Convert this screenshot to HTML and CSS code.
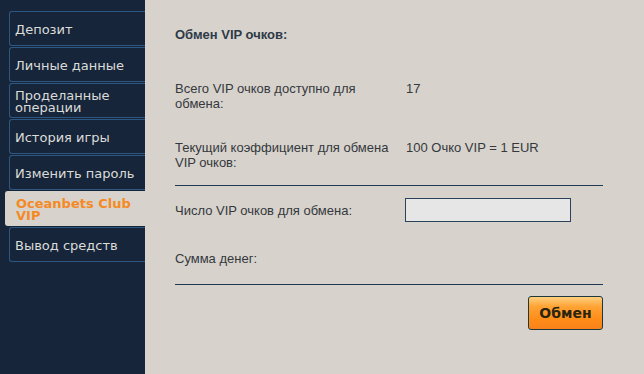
FILE: index.html
```html
<!DOCTYPE html>
<html lang="ru">
<head>
    <meta charset="UTF-8">
    <meta name="viewport" content="width=device-width, initial-scale=1.0">
    <title>Обмен VIP очков</title>
    <link rel="stylesheet" href="styles.css">
</head>
<body>
    <div class="page">
        <nav class="sidebar">
            <ul class="menu">
                <li class="menu-item">Депозит</li>
                <li class="menu-item">Личные данные</li>
                <li class="menu-item">Проделанные операции</li>
                <li class="menu-item">История игры</li>
                <li class="menu-item">Изменить пароль</li>
                <li class="menu-item active">Oceanbets Club VIP</li>
                <li class="menu-item">Вывод средств</li>
            </ul>
        </nav>

        <main class="content">
            <h2 class="title">Обмен VIP очков:</h2>

            <div class="info-row first">
                <div class="label">Всего VIP очков доступно для обмена:</div>
                <div class="value">17</div>
            </div>
            <div class="info-row">
                <div class="label">Текущий коэффициент для обмена VIP очков:</div>
                <div class="value">100 Очко VIP = 1 EUR</div>
            </div>

            <div class="divider"></div>

            <div class="form-row">
                <label class="label" for="points">Число VIP очков для обмена:</label>
                <input type="text" class="points-input" id="points">
            </div>
            <div class="info-row sum">
                <div class="label">Сумма денег:</div>
                <div class="value"></div>
            </div>

            <div class="divider"></div>

            <div class="actions">
                <button class="exchange-btn">Обмен</button>
            </div>
        </main>
    </div>
</body>
</html>
```

FILE: styles.css
```css
:root {
    --nav-bg: #16253a;
    --nav-border: #2d5680;
    --nav-text: #dcdcd8;
    --content-bg: #d7d3cc;
    --text-color: #35383d;
    --title-color: #2e3a48;
    --line-color: #1f3a52;
    --accent: #f58a25;
}

html, body {
    height: 100%;
}

body {
    margin: 0;
    background-color: var(--content-bg);
    font-family: "Liberation Sans", Arial, sans-serif;
}

.page {
    display: flex;
    min-height: 100%;
}

.sidebar {
    width: 145px;
    flex-shrink: 0;
    background-color: var(--nav-bg);
    padding-top: 11px;
    box-sizing: border-box;
}

.menu {
    list-style: none;
    margin: 0;
    padding: 0 0 0 9px;
}

.menu-item {
    display: flex;
    align-items: center;
    height: 35px;
    margin-bottom: 1px;
    padding: 3px 6px 0 5px;
    box-sizing: border-box;
    border: 1px solid var(--nav-border);
    border-right: none;
    border-radius: 3px 0 0 3px;
    color: var(--nav-text);
    font-family: "DejaVu Sans", Verdana, sans-serif;
    font-size: 13px;
    line-height: 12px;
}

.menu-item.active {
    margin-left: -4px;
    padding-left: 10px;
    border-color: var(--content-bg);
    background-color: var(--content-bg);
    color: var(--accent);
    font-weight: bold;
}

.content {
    flex: 1;
    padding: 27px 41px 20px 30px;
    color: var(--text-color);
    font-size: 13px;
    line-height: 15px;
}

.title {
    margin: 0 0 38px 0;
    font-size: 13px;
    line-height: 16px;
    color: var(--title-color);
}

.info-row,
.form-row {
    display: grid;
    grid-template-columns: 231px 1fr;
}

.info-row.first {
    margin-bottom: 29px;
}

.label {
    padding-right: 12px;
}

.divider {
    height: 1px;
    background-color: var(--line-color);
    margin-top: 15px;
}

.form-row {
    align-items: center;
    margin-top: 12px;
}

.points-input {
    width: 166px;
    height: 24px;
    box-sizing: border-box;
    border: 1px solid #2a4358;
    background-color: #e6e6e6;
    margin-left: -1px;
}

.info-row.sum {
    margin-top: 29px;
}

.sum + .divider {
    margin-top: 18px;
}

.actions {
    display: flex;
    justify-content: flex-end;
    margin-top: 11px;
}

.exchange-btn {
    width: 75px;
    height: 34px;
    border: 1px solid #1c3a3e;
    border-radius: 3px;
    background: linear-gradient(to bottom, #ffcf7e 0%, #ffa335 30%, #ff8c18 70%, #f7821a 100%);
    color: #2a2410;
    font-family: "DejaVu Sans", Verdana, sans-serif;
    font-size: 14px;
    font-weight: bold;
    padding: 0;
}
```
